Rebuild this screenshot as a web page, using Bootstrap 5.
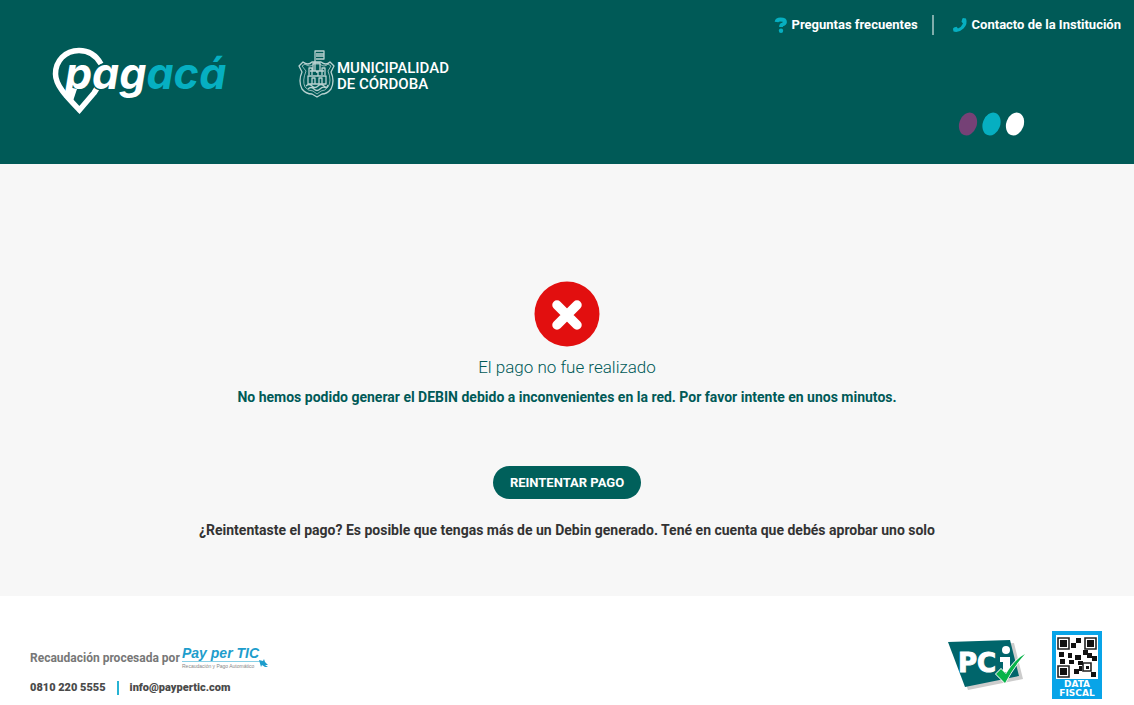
<!DOCTYPE html>
<html lang="es">
<head>
<meta charset="utf-8">
<meta name="viewport" content="width=device-width, initial-scale=1">
<title>Pagacá - Municipalidad de Córdoba</title>
<link href="https://cdn.jsdelivr.net/npm/bootstrap@5.3.0/dist/css/bootstrap.min.css" rel="stylesheet">
<style>
:root { --brand: #005a57; --aqua: #06afc1; }
body { font-family: Roboto, "Noto Sans", sans-serif; background: #fff; color: #333; }
.site-header { background: var(--brand); min-height: 164px; }
.logos { padding: 46px 0 0 50px; gap: 68px; }
.side { padding: 14px 13px 0 0; }
.top-links { font-size: 13px; line-height: 22px; font-weight: 700; }
.top-links a { color: #fff; text-decoration: none; }
.top-links .divider { width: 2px; height: 20px; background: #80adab; margin: 0 18px 0 14px; }
.dots { margin: 75px 96px 0 0; }
.result { background: #f7f7f7; min-height: 432px; padding: 117px 16px 56px; }
.result h1 { font-size: 17px; line-height: 24px; font-weight: 300; color: var(--brand); margin: 8px 0 9px; }
.result p { font-size: 14px; line-height: 18px; margin: 0; }
.result .reason { font-weight: 700; color: var(--brand); }
.result .notice { font-weight: 700; color: #333; }
.btn-retry { --bs-btn-bg: #00605b; --bs-btn-color: #fff; --bs-btn-hover-bg: #004845; --bs-btn-hover-color: #fff; --bs-btn-active-bg: #004845; --bs-btn-active-color: #fff; --bs-btn-font-size: 13px; --bs-btn-font-weight: 700; line-height: 21px; padding: 5px 16px; margin: 60px 0 22px; }
.site-footer { padding: 35px 32px 0 30px; font-size: 11px; line-height: 18px; font-weight: 900; }
.site-footer a { color: #4a4a4a; text-decoration: none; }
.provider { padding-top: 14px; }
.processed { color: #777; font-size: 12px; font-weight: 700; }
.contact-bar { width: 2px; height: 14px; background: #27b3d3; margin: 0 11px; }
</style>
</head>
<body>
<header class="site-header d-flex justify-content-between">
  <div class="logos d-flex align-items-start">
    <svg width="180" height="70" viewBox="0 0 180 70" role="img" aria-label="pagacá">
      <path d="M51 18C46 9 38 4.500 29 4.500C15 4.500 5.500 15 5.500 28C5.500 40 18 52 29.500 64L44 47Q47 42 50 38" fill="none" stroke="#fff" stroke-width="5.500"/>
      <path d="M18 41L27 43L23 55L15 47Z" fill="#fff"/>
      <text x="15" y="43" font-family="Inter" font-size="43" font-weight="700" font-style="italic" fill="#fff"><tspan>p</tspan><tspan stroke="#005a57" stroke-width="3" paint-order="stroke">ag</tspan><tspan fill="#06afc1">acá</tspan></text>
    </svg>
    <svg width="152" height="54" viewBox="0 0 152 54" role="img" aria-label="Municipalidad de Córdoba">
      <g fill="none" stroke="#b9d2d1" stroke-width="1.300" stroke-linejoin="round">
        <path d="M1 20L5 16Q10 20 14 16H23Q28 20 32 16L36 20L33 26Q37 35 33 43Q29 48 24 48L19 51L14 48Q8 48 4 43Q0 35 4 26Z"/>
        <path d="M4 20L7 18Q12 22 16 18H22Q26 22 30 18L33 20L30 25Q34 35 30 41Q27 45 23 45L19 48L15 45Q10 45 7 41Q4 35 8 25Z" stroke-width=".8"/>
        <path d="M17 25V5H26V13H18M18 8H26M18 10H26M15 25V17H22V25M12 25H26M11 29V22H14V29M24 29V22H27V29M10 30H28V38H10ZM14 38V32H17V38M21 38V32H24V38M18 26H20V30M8 40Q11 37 14 40T20 40T26 40T30 39M10 43Q13 40 16 43T22 43T28 42"/>
      </g>
      <g fill="#fff" font-family="Roboto" font-size="15" font-weight="500">
        <text x="39" y="27">MUNICIPALIDAD</text>
        <text x="39" y="43">DE CÓRDOBA</text>
      </g>
    </svg>
  </div>
  <div class="side d-flex flex-column align-items-end">
    <nav class="top-links d-flex align-items-center" aria-label="Ayuda">
      <a href="#preguntas" class="d-flex align-items-center gap-1">
        <svg width="14" height="16" viewBox="0 0 14 16" aria-hidden="true"><path d="M2.500 5Q3 2.500 6.500 2.500Q11 2.500 11 5Q11 6.500 8.500 7.500Q7 8 7 10" fill="none" stroke="#06afc1" stroke-width="3.800"/><circle cx="7" cy="13.700" r="2.200" fill="#06afc1"/></svg>
        Preguntas frecuentes</a>
      <span class="divider"></span>
      <a href="#contacto" class="d-flex align-items-center gap-1">
        <svg width="16" height="16" viewBox="0 0 16 16" aria-hidden="true"><path d="M11 1L14 1.500Q16 7 11.500 11.500Q7 16 1.500 14.500L1 12Q1 11 2 10.500L4.500 9.800L6 11.500Q9.500 10 11 6.500L9.500 4.800L10.300 1.700Z" fill="#06afc1"/></svg>
        Contacto de la Institución</a>
    </nav>
    <svg class="dots" width="68" height="26" viewBox="0 0 68 26" aria-hidden="true">
      <ellipse cx="11" cy="13" rx="8.700" ry="11.700" transform="rotate(20 11 13)" fill="#754176"/><ellipse cx="34.500" cy="13" rx="8.700" ry="11.700" transform="rotate(20 34.500 13)" fill="#06afc1"/><ellipse cx="58" cy="13" rx="8.700" ry="11.700" transform="rotate(20 58 13)" fill="#fff"/>
    </svg>
  </div>
</header>

<main class="result d-flex flex-column align-items-center text-center">
  <svg width="66" height="66" viewBox="0 0 66 66" aria-hidden="true">
    <circle cx="33" cy="33" r="32.500" fill="#e20f0f"/>
    <path d="M23 24L43 44M43 24L23 44" stroke="#fff" stroke-width="9.500" stroke-linecap="round"/>
  </svg>
  <h1>El pago no fue realizado</h1>
  <p class="reason">No hemos podido generar el DEBIN debido a inconvenientes en la red. Por favor intente en unos minutos.</p>
  <button type="button" class="btn btn-retry rounded-pill">REINTENTAR PAGO</button>
  <p class="notice">¿Reintentaste el pago? Es posible que tengas más de un Debin generado. Tené en cuenta que debés aprobar uno solo</p>
</main>

<footer class="site-footer d-flex justify-content-between align-items-start">
  <div class="provider">
    <div class="processed d-flex align-items-center">
      <span>Recaudación procesada por</span>
      <svg width="90" height="26" viewBox="0 0 90 26" role="img" aria-label="Pay per TIC, Recaudación y Pago Automático">
        <text x="2" y="13" font-family="Liberation Sans" font-size="14" font-weight="700" font-style="italic" fill="#1d9dcc">Pay per TIC</text>
        <path d="M2 16.500H81" stroke="#86cfe6"/>
        <text x="2" y="23" font-family="Liberation Sans" font-size="5" font-weight="400" fill="#888">Recaudación y Pago Automático</text>
        <path d="M79 15L83 16L84 14L85 17L88 20L85 20L88 22L85 22L82 20L81 22Z" fill="#1d9dcc"/>
      </svg>
    </div>
    <div class="d-flex align-items-center mt-2">
      <a href="tel:08102205555">0810 220 5555</a>
      <span class="contact-bar"></span>
      <a href="mailto:info@paypertic.com">info@paypertic.com</a>
    </div>
  </div>
  <div class="d-flex align-items-start gap-4">
    <svg width="80" height="68" viewBox="0 0 80 68" role="img" aria-label="PCI">
      <path d="M5 16L66 12L75 48L20 59Z" fill="#ccc"/>
      <path d="M0 11L62 9L71 45L17 56Z" fill="#00656b"/>
      <text x="10" y="41" font-family="DejaVu Sans" font-size="26" font-weight="700" fill="#fff" stroke="#fff" stroke-width="1">PC</text>
      <path d="M52 26H62V41H55V31H52Z" fill="#fff"/><circle cx="58" cy="19" r="4" fill="#fff"/>
      <path d="M48 43L53 38L58 43Q66 29 77 23Q66 35 57 52Z" fill="#08b34a" stroke="#fff" stroke-width="1.500" paint-order="stroke"/>
    </svg>
    <a href="#data-fiscal" aria-label="Data fiscal" class="d-block">
    <svg class="d-block" width="50" height="68" viewBox="0 0 50 68">
      <path fill="#08a4e8" d="M0 0H50V68H0Z"/><path fill="#fff" d="M4 4H46V48H4Z"/>
      <g fill="none" stroke="#222" stroke-width="1.600"><path d="M6 7H17V18H6ZM33 7H44V18H33ZM6 35H17V46H6ZM31 32H39V40H31Z"/></g>
      <path fill="#111" d="M8 9H15V16H8ZM35 9H42V16H35ZM8 37H15V44H8ZM34 35H37V38H34ZM24 7H29V12H24ZM19 12H24V17H19ZM7 21H12V26H7ZM16 22H20V27H16ZM8 28H13V33H8ZM17 29H22V33H17ZM23 24H29V29H23ZM31 19H36V24H31ZM35 22H40V27H35ZM40 25H45V30H40ZM26 30H31V34H26ZM27 35H30V40H27ZM22 38H27V43H22ZM39 41H44V46H39Z"/>
      <g fill="#fff" font-family="DejaVu Sans" font-size="9" font-weight="700" text-anchor="middle"><text x="25" y="56">DATA</text><text x="25" y="65">FISCAL</text></g>
    </svg></a>
  </div>
</footer>
<script src="https://cdn.jsdelivr.net/npm/bootstrap@5.3.0/dist/js/bootstrap.bundle.min.js"></script>
</body>
</html>
